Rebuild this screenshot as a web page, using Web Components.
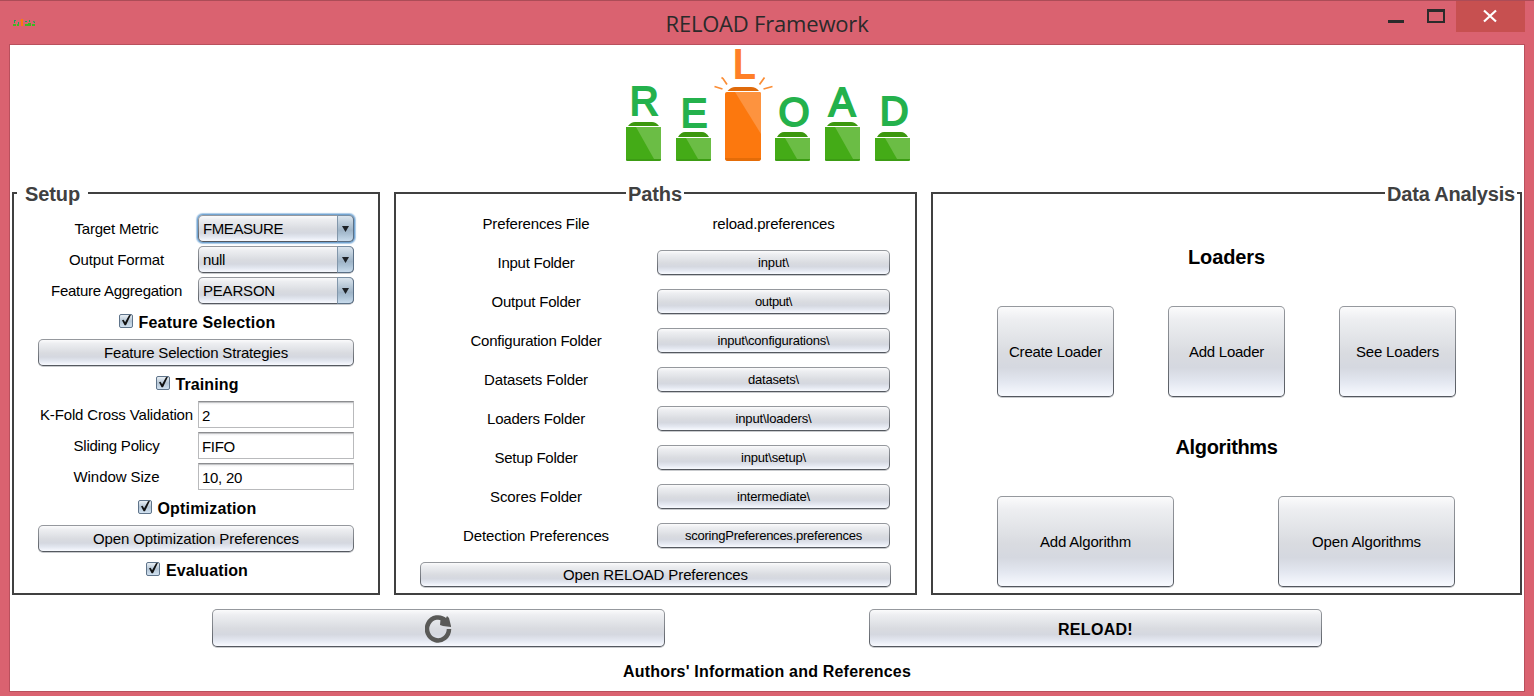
<!DOCTYPE html>
<html lang="en">
<head>
<meta charset="utf-8">
<title>RELOAD Framework</title>
<style>
html,body{margin:0;height:696px;overflow:hidden;background:#da6270}
body{font-family:"Liberation Sans",Arial,sans-serif;font-size:15px;color:#000}
</style>
</head>
<body>
<app-window></app-window>
<script>
function define(name, html, after) {
  const t = document.createElement('template');
  t.innerHTML = html;
  customElements.define(name, class extends HTMLElement {
    connectedCallback() {
      if (this.shadowRoot) return;
      this.attachShadow({mode: 'open'}).appendChild(t.content.cloneNode(true));
      if (after) after.call(this, this.shadowRoot);
    }
  });
}

/* Text run whose advance is tracked to a given width */
define('fit-text', `<style>:host{display:inline-block;white-space:nowrap;line-height:1.2}</style><slot></slot>`, function () {
  const w = +this.getAttribute('w');
  if (!w) return;
  const n = this.textContent.length;
  const natural = this.getBoundingClientRect().width;
  const s = (w - natural) / n;
  this.style.letterSpacing = s.toFixed(3) + 'px';
});

define('nimbus-button', `<style>
:host{display:flex;box-sizing:border-box;align-items:center;justify-content:center;height:27px;border:1px solid transparent;border-radius:5px;
background:linear-gradient(#fbfbfc 0%,#edeef1 14%,#e2e4e8 35%,#d9dbe0 52%,#d5d8e0 68%,#e3e7f0 84%,#f8faff 100%) padding-box,linear-gradient(#96999e,#83878d 40%,#53575e) border-box;box-shadow:0 1px 0 #c9cbce}
:host([small]){height:25px;font-size:13px}
:host([big]){height:91px}
:host([run]){height:38px;font-size:16px;font-weight:bold;padding-top:3px}
</style><slot></slot>`);

define('combo-box', `<style>
:host{display:flex;box-sizing:border-box;height:27px;width:156px;border:1px solid transparent;border-radius:5px;
background:linear-gradient(#fbfbfc 0%,#edeef1 14%,#e2e4e8 35%,#d9dbe0 52%,#d5d8e0 68%,#e3e7f0 84%,#f8faff 100%) padding-box,linear-gradient(#96999e,#83878d 40%,#53575e) border-box;box-shadow:0 1px 0 #c9cbce;align-items:center}
:host([focused]){box-shadow:0 0 0 1px #73a4d1,0 0 1px 1.5px #a9c9e6}
.v{flex:1;padding-left:4px}
.a{width:17px;height:27px;margin:-1px;box-sizing:border-box;border:1px solid #5b7086;border-top-color:#7a8fa3;border-left-color:#8297ab;border-radius:0 5px 5px 0;background:linear-gradient(#dbe5ee,#b5c6d5 35%,#9fb4c7 58%,#a9bfd2 72%,#c9dced);display:flex;align-items:center;justify-content:center}
svg{display:block}
</style><div class="v"><slot></slot></div><div class="a"><svg width="7" height="6"><path d="M0 0h7L3.5 6z" fill="#1d2126"/></svg></div>`);

define('text-field', `<style>
:host{display:flex;box-sizing:border-box;align-items:center;width:156px;height:27px;border:1px solid #b9babc;border-top:1px solid #8c8d90;background:linear-gradient(#c4c5c7 0,#c4c5c7 1px,#ececee 1px,#fff 3px);padding:2px 0 0 3px}
</style><slot></slot>`);

define('check-heading', `<style>
:host{display:flex;align-items:center;justify-content:center;font-size:16px;font-weight:bold;gap:6px;padding:2px 0 0 2px}
svg{display:block;margin-top:-3px}
</style><svg width="14" height="14"><defs><linearGradient id="g" x2="0" y2="1"><stop offset="0" stop-color="#eef3f7"/><stop offset=".5" stop-color="#b4c5d5"/><stop offset="1" stop-color="#d3e3f2"/></linearGradient></defs><rect x=".5" y=".5" width="13" height="13" rx="1.5" fill="url(#g)" stroke="#5f748a"/><path d="M3 6.300l1.600-.5 1.500 2.500L10 1.300l2-.6L7 11.300H5.600z" fill="#111"/></svg><slot></slot>`);

define('titled-panel', `<style>
:host{display:grid;box-sizing:border-box;height:403px;grid-template-rows:2px 1fr}
.top{display:flex;align-items:center;height:2px;font-size:20px;font-weight:bold;color:#404040}
.l,.r{height:2px;background:#404040;flex:none}
.r{flex:1}
.t{flex:none;text-align:center;line-height:24px;margin-top:1px}
.b{border:2px solid #404040;border-top:0;min-height:0}
</style><div class="top"><div class="l"></div><div class="t"><slot name="title"></slot></div><div class="r"></div></div><div class="b"><slot></slot></div>`, function (r) {
  r.querySelector('.l').style.width = this.getAttribute('lead') + 'px';
  r.querySelector('.t').style.width = this.getAttribute('gap') + 'px';
});

define('reload-logo', `<style>:host{display:block}svg{display:block;overflow:visible}text{font:40px "Liberation Sans",Arial,sans-serif;fill:#24b14c;stroke:#24b14c;stroke-width:1.9px}.o{fill:#ff7f27;stroke:#ff7f27}</style>
<svg width="310" height="122" viewBox="610 45 310 122">
<defs>
<g id="s"><path d="M2 5Q5 0 9 0H26Q30 0 33 5z" fill="#3c970f"/><path d="M0 6H35V28Q35 29 33 29H2Q0 29 0 28z" fill="#44ab17"/><path d="M10 6H35V27H22z" fill="#6bbd45"/><path d="M0 27H35Q35 29 33 29H2Q0 29 0 27z" fill="#3c9c14"/></g>
<g id="m"><path d="M2 4Q5 0 9 0H26Q30 0 33 4z" fill="#3c970f"/><path d="M0 5H35V38Q35 39 33 39H2Q0 39 0 38z" fill="#44ab17"/><path d="M10 5H35V37H28z" fill="#6bbd45"/><path d="M0 37H35Q35 39 33 39H2Q0 39 0 37z" fill="#3c9c14"/></g>
</defs>
<use href="#m" x="626" y="122"/><use href="#s" x="676" y="132"/><use href="#s" x="775" y="132"/><use href="#m" x="825" y="122"/><use href="#s" x="875" y="132"/>
<path d="M727.500 91Q731 87 735 87H751Q756 87 759 91z" fill="#df6a0a"/><path d="M725 94Q725 92 727 92H759Q761 92 761 94V158Q761 161 758 161H728Q725 161 725 158z" fill="#fc780e"/><path d="M735 92H759Q761 92 761 94V134z" fill="#fd933f"/><path d="M725 158H761Q761 161 758 161H728Q725 161 725 158z" fill="#e46c08"/>
<path d="M721.500 77.500l1.500 1 4 6M714.500 86.500l8 2.500M764.500 77.500l-5 7M772.500 86.500l-9 2.500" fill="none" stroke="#fb8d35" stroke-width="1.7"/>
<text x="629.800" y="114.700">R</text>
<text x="680.800" y="126.700">E</text>
<text class="o" x="733" y="77.500">L</text>
<text x="778.500" y="126">O</text>
<text x="828.800" y="115.500">A</text>
<text x="879.800" y="125">D</text>
</svg>`);

define('title-bar', `<style>
:host{display:grid;grid-template-columns:1fr 400px 1fr;height:44px;box-sizing:border-box;border-top:1px solid #ac4c57;color:#2a2a2a}
.i{padding:18px 0 0 13px}
.t{font:22px "Open Sans","Noto Sans",sans-serif;text-align:center;padding-top:7px}
.c{display:flex;justify-content:flex-end;padding-right:9px}
svg{display:block}
</style>
<div class="i"><svg width="22" height="7"><path d="M1 1h2v1h-1v2h-1zM5 3h1v2h-1zM12 2h2v1h-2zM16 1h1v2h-1zM20 2h1l1 1v1h-1z" fill="#12a858"/><path d="M0 5h3v2H0zM4 5h2v2H4zM12 5h4v2h-4zM15 4h3v3h-3zM19 5h3v2h-3z" fill="#3cb81f"/><path d="M8 0h2v7H8zM7 1h1v1H7z" fill="#fa7a10"/></svg></div>
<div class="t"><fit-text w="203">RELOAD Framework</fit-text></div>
<div class="c"><svg width="137" height="31"><rect y="19" width="16" height="3" fill="#2b2b2b"/><path d="M39 8h18v14H39zM41 11v9h14v-9z" fill="#2b2b2b" fill-rule="evenodd"/><rect x="68" width="69" height="31" fill="#c75050"/><path d="M96 9.500l12 11M108 9.500l-12 11" stroke="#fff" stroke-width="2.200"/></svg></div>`);

define('setup-form', `<style>
:host{display:grid;grid-template-columns:158px 156px;column-gap:2px;grid-auto-rows:31px;padding:19px 24px 0;align-items:center}
.l{text-align:center;padding-right:1px}.w{grid-column:1/3}
</style>
<div class="l"><fit-text w="84">Target Metric</fit-text></div><combo-box focused><fit-text w="80">FMEASURE</fit-text></combo-box>
<div class="l"><fit-text w="95">Output Format</fit-text></div><combo-box><fit-text w="22">null</fit-text></combo-box>
<div class="l"><fit-text w="131">Feature Aggregation</fit-text></div><combo-box><fit-text w="72">PEARSON</fit-text></combo-box>
<check-heading class="w"><fit-text w="137">Feature Selection</fit-text></check-heading>
<nimbus-button class="w"><fit-text w="184">Feature Selection Strategies</fit-text></nimbus-button>
<check-heading class="w"><fit-text w="63">Training</fit-text></check-heading>
<div class="l"><fit-text w="153">K-Fold Cross Validation</fit-text></div><text-field>2</text-field>
<div class="l"><fit-text w="86">Sliding Policy</fit-text></div><text-field><fit-text w="33">FIFO</fit-text></text-field>
<div class="l"><fit-text w="86">Window Size</fit-text></div><text-field><fit-text w="40">10, 20</fit-text></text-field>
<check-heading class="w"><fit-text w="99">Optimization</fit-text></check-heading>
<nimbus-button class="w"><fit-text w="206">Open Optimization Preferences</fit-text></nimbus-button>
<check-heading class="w"><fit-text w="82">Evaluation</fit-text></check-heading>`);

const paths = [['Input Folder',77,'input\\',31],['Output Folder',89,'output\\',37],['Configuration Folder',131,'input\\configurations\\',112],['Datasets Folder',104,'datasets\\',51],['Loaders Folder',98,'input\\loaders\\',76],['Setup Folder',83,'input\\setup\\',65],['Scores Folder',92,'intermediate\\',73],['Detection Preferences',146,'scoringPreferences.preferences',177]];
define('paths-form', `<style>
:host{display:grid;grid-template-columns:232px 233px;column-gap:5px;grid-auto-rows:39px;padding:10px 24px 0;align-items:center;text-align:center}
.w{grid-column:1/3;width:471px;font-size:15px}
</style>
<div><fit-text w="107">Preferences File</fit-text></div><div><fit-text w="122">reload.preferences</fit-text></div>
${paths.map(p => `<div><fit-text w="${p[1]}">${p[0]}</fit-text></div><nimbus-button small><fit-text w="${p[3]}">${p[2]}</fit-text></nimbus-button>`).join('')}
<nimbus-button class="w" small><fit-text w="185">Open RELOAD Preferences</fit-text></nimbus-button>`);

define('analysis-form', `<style>
:host{display:grid;grid-auto-rows:95px;padding:15px 64px 0;align-items:center}
h2{margin:0;font-size:20px;line-height:24px;text-align:center}
.r{display:flex;justify-content:space-between}
.a nimbus-button{width:117px}.b nimbus-button{width:177px}.b{padding-right:1px}
</style>
<h2><fit-text w="77">Loaders</fit-text></h2>
<div class="r a"><nimbus-button big><fit-text w="93">Create Loader</fit-text></nimbus-button><nimbus-button big><fit-text w="75">Add Loader</fit-text></nimbus-button><nimbus-button big><fit-text w="83">See Loaders</fit-text></nimbus-button></div>
<h2><fit-text w="102">Algorithms</fit-text></h2>
<div class="r b"><nimbus-button big><fit-text w="91">Add Algorithm</fit-text></nimbus-button><nimbus-button big><fit-text w="109">Open Algorithms</fit-text></nimbus-button></div>`);

define('app-window', `<style>
:host{display:block;width:1534px;height:696px;background:#da6270}
main{box-sizing:border-box;width:1516px;height:648px;margin-left:9px;border:1px solid #b9505d;background:#fff}
.logo{display:flex;padding-left:600px;height:147px}
.panels{display:grid;grid-template-columns:368px 523px 591px;column-gap:14px;padding-left:2px}
.actions{display:flex;gap:204px;padding:14px 0 0 202px}
.actions nimbus-button{width:453px}
footer{text-align:center;font-weight:bold;font-size:16px;padding-top:15px}
svg{display:block}
</style>
<title-bar></title-bar>
<main>
<div class="logo"><reload-logo></reload-logo></div>
<div class="panels">
<titled-panel lead="5" gap="71"><fit-text slot="title" w="55">Setup</fit-text><setup-form></setup-form></titled-panel>
<titled-panel lead="232" gap="58"><fit-text slot="title" w="54">Paths</fit-text><paths-form></paths-form></titled-panel>
<titled-panel lead="454" gap="132"><fit-text slot="title" w="128">Data Analysis</fit-text><analysis-form></analysis-form></titled-panel>
</div>
<div class="actions">
<nimbus-button run><svg width="28" height="30"><path d="M20.500 5.500A11 11.500 0 1 0 24 14" fill="none" stroke="#595957" stroke-width="4.500"/><path d="M15.500 4.500L21 3 22 1l2 2 2 8v1l-8-1-3-1z" fill="#595957"/></svg></nimbus-button>
<nimbus-button run><fit-text w="75">RELOAD!</fit-text></nimbus-button>
</div>
<footer><fit-text w="288">Authors' Information and References</fit-text></footer>
</main>`);
</script>
</body>
</html>
